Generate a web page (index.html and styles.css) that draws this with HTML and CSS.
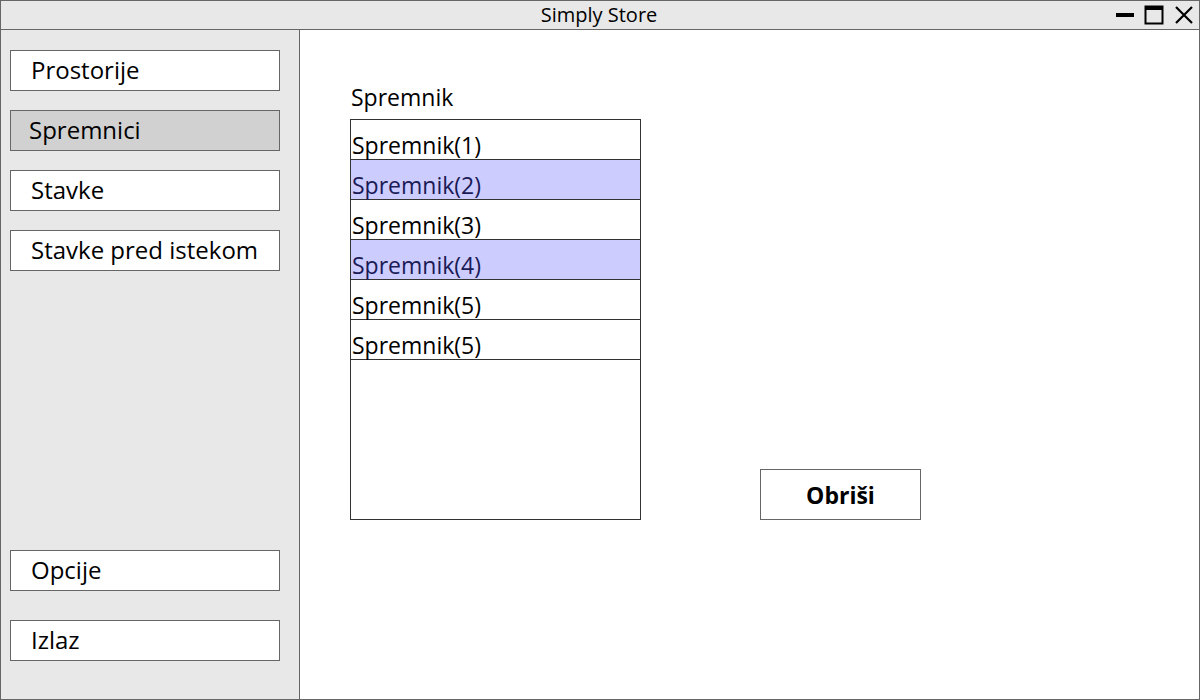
FILE: index.html
```html
<!DOCTYPE html>
<html>
<head>
<meta charset="utf-8">
<link rel="stylesheet" href="styles.css">
</head>
<body>
<div class="window">
  <div class="titlebar">
    <div class="title">Simply Store</div>
    <div class="controls">
      <svg width="20" height="20" viewBox="0 0 20 20"><rect x="1" y="8" width="18" height="4" fill="#000"/></svg>
      <svg width="22" height="20" viewBox="0 0 22 20"><rect x="2.5" y="1.5" width="17" height="17" fill="none" stroke="#000" stroke-width="2"/><rect x="2" y="1" width="18" height="4" fill="#000"/></svg>
      <svg width="22" height="20" viewBox="0 0 22 20"><path d="M3 2 L19 18 M19 2 L3 18" stroke="#000" stroke-width="2.2" fill="none"/></svg>
    </div>
  </div>
  <div class="body">
    <aside class="sidebar">
      <div class="nav-top">
        <div class="nav-btn">Prostorije</div>
        <div class="nav-btn active">Spremnici</div>
        <div class="nav-btn">Stavke</div>
        <div class="nav-btn">Stavke pred istekom</div>
      </div>
      <div class="nav-bottom">
        <div class="nav-btn">Opcije</div>
        <div class="nav-btn">Izlaz</div>
      </div>
    </aside>
    <main class="content">
      <div class="list-col">
        <div class="label">Spremnik</div>
        <div class="list">
          <div class="row">Spremnik(1)</div>
          <div class="row sel">Spremnik(2)</div>
          <div class="row">Spremnik(3)</div>
          <div class="row sel">Spremnik(4)</div>
          <div class="row">Spremnik(5)</div>
          <div class="row">Spremnik(5)</div>
        </div>
      </div>
      <div class="action-col">
        <button class="delete">Obriši</button>
      </div>
    </main>
  </div>
</div>
</body>
</html>
```
FILE: styles.css
```css
* { box-sizing: border-box; }
html, body { margin: 0; padding: 0; }
body {
  width: 1200px;
  height: 700px;
  font-family: "Open Sans", "Noto Sans", sans-serif;
  color: #000;
  background: #fff;
  overflow: hidden;
}
.window {
  width: 1200px;
  height: 700px;
  border: 1px solid #666;
  display: flex;
  flex-direction: column;
}
.titlebar {
  height: 29px;
  flex: none;
  background: #e8e8e8;
  border-bottom: 1px solid #666;
  display: flex;
  align-items: center;
  justify-content: center;
  position: relative;
}
.title {
  font-size: 20px;
  line-height: 28px;
  margin-left: -2px;
}
.controls {
  position: absolute;
  right: 4px;
  top: 4px;
  display: flex;
  gap: 8px;
  align-items: center;
}
.controls svg { display: block; }
.body {
  flex: 1;
  display: flex;
  min-height: 0;
}
.sidebar {
  width: 299px;
  flex: none;
  background: #e8e8e8;
  border-right: 1px solid #666;
  padding: 20px 19px 39px 9px;
  display: flex;
  flex-direction: column;
  justify-content: space-between;
}
.nav-top, .nav-bottom {
  display: flex;
  flex-direction: column;
  gap: 20px;
}
.nav-bottom { gap: 30px; }
.nav-btn {
  height: 41px;
  background: #fff;
  border: 1px solid #666;
  font-size: 24px;
  line-height: 38px;
  padding-left: 20px;
  margin-bottom: -1px;
}
.nav-btn.active {
  background: #d1d1d1;
  padding-left: 18px;
}
.content {
  flex: 1;
  display: flex;
  align-items: flex-start;
  padding-top: 52px;
  padding-left: 50px;
}
.label {
  font-size: 23px;
  line-height: 30px;
  padding-left: 1px;
  margin-bottom: 7px;
}
.list {
  width: 291px;
  height: 401px;
  border: 1px solid #333;
  background: #fff;
}
.row {
  height: 40px;
  border-bottom: 1px solid #333;
  font-size: 23px;
  line-height: 23px;
  padding-top: 14px;
  padding-left: 1px;
  white-space: nowrap;
}
.row.sel {
  background: #ccccff;
  color: #1a1a55;
}
.action-col {
  padding-top: 387px;
  padding-left: 119px;
}
.delete {
  width: 161px;
  height: 51px;
  border: 1px solid #666;
  background: #fff;
  font-family: "Open Sans", "Noto Sans", sans-serif;
  font-weight: bold;
  font-size: 23px;
  color: #000;
  padding: 0;
  margin: 0;
}
```
